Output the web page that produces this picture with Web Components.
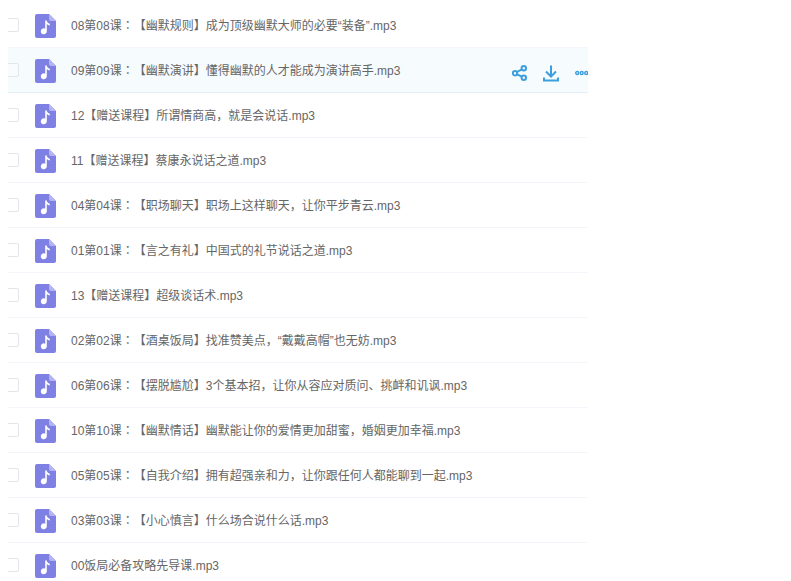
<!DOCTYPE html>
<html><head><meta charset="utf-8"><style>
html,body{margin:0;background:#fff}
body{padding:3px 0 0 8px;height:578px;box-sizing:border-box;overflow:hidden;font-family:"Liberation Sans","Noto Sans CJK SC",sans-serif}
file-list{width:580px}
.c{font-family:"Noto Sans CJK TC",sans-serif;line-height:0}
</style></head><body>
<template id="row-t"><style>
:host{display:flex;align-items:center;height:44px;border-bottom:1px solid #f2f6fb;overflow:hidden;position:relative;box-sizing:content-box}
:host([active]){background:#f6fbfe;border-bottom-color:#e3f0f8}
.cb{flex:none;width:14px;height:14px;margin-left:-3px;border:1px solid #e3e6ea;border-radius:2px;box-sizing:border-box;background:#fff;}
:host([active]) .cb{background:#f9fcfe}
.ic{flex:none;display:block;width:21px;height:24px;margin:2px 0 0 16px}
.t{margin:2px 0 0 15px;font-size:12px;line-height:44px;color:#666;white-space:nowrap;flex:1;min-width:0;text-spacing-trim:space-all}
.acts{display:none;position:absolute;left:504px;top:3px;height:44px;align-items:center;gap:16px;width:90px}
:host([active]) .acts{display:flex}
.acts svg{display:block;flex:none}
</style>
<span class="cb"></span>
<svg class="ic" viewBox="0 0 21 24"><path d="M2 0H14L21 7V22a2 2 0 0 1-2 2H2a2 2 0 0 1-2-2V2a2 2 0 0 1 2-2Z" fill="#7f80e4"/><path d="M14 0L21 7H16a2 2 0 0 1-2-2Z" fill="#b3b4f0"/><path d="M10.2 6.5h1.6c.2 1.8 1.2 2.7 3 3.2v1.7c-1.2-.2-2.2-.7-3-1.5v7.4a3 3 0 1 1-1.6-2.6Z" fill="#fff"/></svg>
<span class="t"><slot></slot></span>
<div class="acts">
<svg width="15" height="16" viewBox="0 0 15 16" fill="none" stroke="#3c9fdc" stroke-width="2"><circle cx="3" cy="8.2" r="2.2"/><circle cx="11.8" cy="3.2" r="2.2"/><circle cx="11.8" cy="12.8" r="2.2"/><path d="M5 7l4.8-2.7M5 9.4l4.8 2.3"/></svg>
<svg width="16" height="17" viewBox="0 0 16 17" fill="none" stroke="#3c9fdc" stroke-width="2"><path d="M8 0.5V11M3 6.5L8 11.5L13 6.5"/><path d="M1 12.5V15.5H15V12.5"/></svg>
<svg width="16" height="6" viewBox="0 0 16 6" fill="none" stroke="#3c9fdc" stroke-width="1.4"><circle cx="2.2" cy="3" r="1.5"/><circle cx="6.7" cy="3" r="1.5"/><circle cx="11.2" cy="3" r="1.5"/></svg>
</div></template>
<template id="list-t"><style>:host{display:block}</style><slot></slot></template>
<file-list>
<file-row>08第08课<span class="c">：</span>【幽默规则】成为顶级幽默大师的必要“装备”.mp3</file-row>
<file-row active>09第09课<span class="c">：</span>【幽默演讲】懂得幽默的人才能成为演讲高手.mp3</file-row>
<file-row>12【赠送课程】所谓情商高，就是会说话.mp3</file-row>
<file-row>11【赠送课程】蔡康永说话之道.mp3</file-row>
<file-row>04第04课<span class="c">：</span>【职场聊天】职场上这样聊天，让你平步青云.mp3</file-row>
<file-row>01第01课<span class="c">：</span>【言之有礼】中国式的礼节说话之道.mp3</file-row>
<file-row>13【赠送课程】超级谈话术.mp3</file-row>
<file-row>02第02课<span class="c">：</span>【酒桌饭局】找准赞美点，“戴戴高帽”也无妨.mp3</file-row>
<file-row>06第06课<span class="c">：</span>【摆脱尴尬】3个基本招，让你从容应对质问、挑衅和讥讽.mp3</file-row>
<file-row>10第10课<span class="c">：</span>【幽默情话】幽默能让你的爱情更加甜蜜，婚姻更加幸福.mp3</file-row>
<file-row>05第05课<span class="c">：</span>【自我介绍】拥有超强亲和力，让你跟任何人都能聊到一起.mp3</file-row>
<file-row>03第03课<span class="c">：</span>【小心慎言】什么场合说什么话.mp3</file-row>
<file-row>00饭局必备攻略先导课.mp3</file-row>
</file-list>
<script>
class FileRow extends HTMLElement{constructor(){super();this.attachShadow({mode:'open'}).appendChild(document.getElementById('row-t').content.cloneNode(true));}}
class FileList extends HTMLElement{constructor(){super();this.attachShadow({mode:'open'}).appendChild(document.getElementById('list-t').content.cloneNode(true));}}
customElements.define('file-row',FileRow);customElements.define('file-list',FileList);
</script>
</body></html>
